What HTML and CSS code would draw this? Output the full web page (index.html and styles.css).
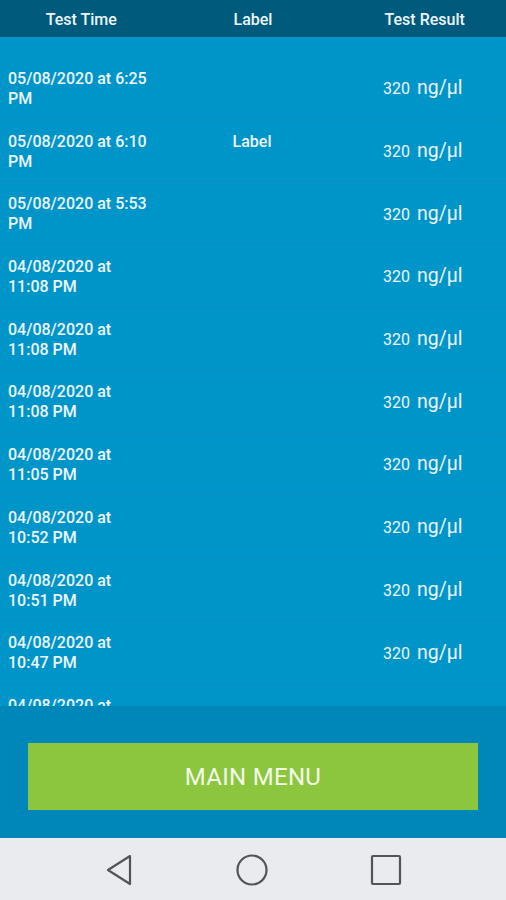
FILE: index.html
```html
<!DOCTYPE html>
<html lang="en">
<head>
    <meta charset="UTF-8">
    <meta name="viewport" content="width=device-width, initial-scale=1.0">
    <title>Test History</title>
    <link rel="stylesheet" href="styles.css">
</head>
<body>
    <div class="screen">
        <header class="table-head">
            <div class="col">Test Time</div>
            <div class="col">Label</div>
            <div class="col">Test Result</div>
        </header>

        <main class="list">
            <div class="row">
                <div class="time">05/08/2020 at 6:25<br>PM</div>
                <div class="label"></div>
                <div class="result"><span class="num">320</span> <span class="unit">ng/µl</span></div>
            </div>
            <div class="row">
                <div class="time">05/08/2020 at 6:10<br>PM</div>
                <div class="label">Label</div>
                <div class="result"><span class="num">320</span> <span class="unit">ng/µl</span></div>
            </div>
            <div class="row">
                <div class="time">05/08/2020 at 5:53<br>PM</div>
                <div class="label"></div>
                <div class="result"><span class="num">320</span> <span class="unit">ng/µl</span></div>
            </div>
            <div class="row">
                <div class="time">04/08/2020 at<br>11:08 PM</div>
                <div class="label"></div>
                <div class="result"><span class="num">320</span> <span class="unit">ng/µl</span></div>
            </div>
            <div class="row">
                <div class="time">04/08/2020 at<br>11:08 PM</div>
                <div class="label"></div>
                <div class="result"><span class="num">320</span> <span class="unit">ng/µl</span></div>
            </div>
            <div class="row">
                <div class="time">04/08/2020 at<br>11:08 PM</div>
                <div class="label"></div>
                <div class="result"><span class="num">320</span> <span class="unit">ng/µl</span></div>
            </div>
            <div class="row">
                <div class="time">04/08/2020 at<br>11:05 PM</div>
                <div class="label"></div>
                <div class="result"><span class="num">320</span> <span class="unit">ng/µl</span></div>
            </div>
            <div class="row">
                <div class="time">04/08/2020 at<br>10:52 PM</div>
                <div class="label"></div>
                <div class="result"><span class="num">320</span> <span class="unit">ng/µl</span></div>
            </div>
            <div class="row">
                <div class="time">04/08/2020 at<br>10:51 PM</div>
                <div class="label"></div>
                <div class="result"><span class="num">320</span> <span class="unit">ng/µl</span></div>
            </div>
            <div class="row">
                <div class="time">04/08/2020 at<br>10:47 PM</div>
                <div class="label"></div>
                <div class="result"><span class="num">320</span> <span class="unit">ng/µl</span></div>
            </div>
            <div class="row">
                <div class="time">04/08/2020 at<br>10:45 PM</div>
                <div class="label"></div>
                <div class="result"><span class="num">320</span> <span class="unit">ng/µl</span></div>
            </div>
        </main>

        <div class="footer">
            <button class="menu-btn">MAIN MENU</button>
        </div>

        <nav class="sys-nav">
            <svg width="30" height="32" viewBox="0 0 30 32">
                <path d="M26 2 L4 16 L26 30 Z" fill="none" stroke="#505558" stroke-width="2.2" stroke-linejoin="round"/>
            </svg>
            <svg width="34" height="34" viewBox="0 0 34 34">
                <circle cx="17" cy="17" r="14.5" fill="none" stroke="#505558" stroke-width="2.2"/>
            </svg>
            <svg width="32" height="32" viewBox="0 0 32 32">
                <rect x="2" y="2" width="28" height="28" rx="1" fill="none" stroke="#505558" stroke-width="2.2"/>
            </svg>
        </nav>
    </div>
</body>
</html>
```

FILE: styles.css
```css
body, html {
    margin: 0;
    padding: 0;
    font-family: Roboto, "Liberation Sans", sans-serif;
    height: 100%;
}
.screen {
    display: flex;
    flex-direction: column;
    height: 900px;
    background-color: #0095c9;
    color: #eef6fa;
}
.table-head {
    display: grid;
    grid-template-columns: 1fr 1fr 1fr;
    height: 37px;
    align-items: center;
    background-color: #005a7b;
    font-size: 16px;
    font-weight: 500;
    padding-top: 2px;
    box-sizing: border-box;
    flex-shrink: 0;
}
.table-head .col {
    text-align: center;
}
.table-head .col:first-child {
    padding-right: 6px;
}
.table-head .col:last-child {
    padding-left: 6px;
}
.list {
    flex-grow: 1;
    overflow: hidden;
    padding-top: 20px;
}
.row {
    display: grid;
    grid-template-columns: 1fr 1fr 1fr;
    height: 62.7px;
    box-sizing: border-box;
    padding: 12px 0 0 8px;
    border-bottom: 1px solid #0a8ec0;
    font-size: 16px;
    font-weight: 500;
}
.time {
    line-height: 20px;
    width: 165px;
}
.label {
    text-align: center;
    line-height: 20px;
    padding-right: 10px;
}
.result {
    align-self: center;
    margin-top: -12px;
    padding-left: 43px;
    white-space: nowrap;
}
.result .num {
    font-size: 16px;
    font-weight: 400;
}
.result .unit {
    font-size: 19.5px;
    font-weight: 400;
    margin-left: 3px;
}
.footer {
    height: 132px;
    flex-shrink: 0;
    background-color: #0087ba;
    display: flex;
    align-items: center;
    justify-content: center;
    padding-top: 9px;
    box-sizing: border-box;
}
.menu-btn {
    width: 450px;
    height: 67px;
    border: none;
    background-color: #8cc63e;
    color: #f3f9e8;
    font-family: Roboto, "Liberation Sans", sans-serif;
    font-size: 24px;
    letter-spacing: 0.3px;
}
.sys-nav {
    height: 62px;
    flex-shrink: 0;
    background-color: #e9ebee;
    display: flex;
    justify-content: center;
    align-items: center;
    gap: 101px;
    padding-top: 2px;
    box-sizing: border-box;
}
```
